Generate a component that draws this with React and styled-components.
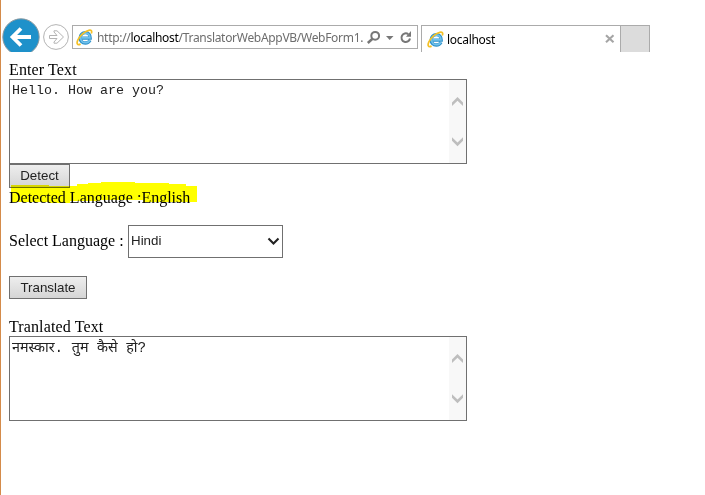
import React from "react";
import styled, { createGlobalStyle } from "styled-components";

const GlobalStyle = createGlobalStyle`
  * { box-sizing: border-box; }
  body { margin: 0; background: #fff; overflow: hidden; }
`;

const Window = styled.div`
  height: 495px;
  border-left: 1px solid #d48b4a;
  background: #fff;
  color: #000;
  font: 16px/18px "Liberation Serif", serif;
`;

const Toolbar = styled.header`
  display: flex;
  align-items: flex-start;
  height: 52px;
  overflow: hidden;
  font: 12px/22px "Noto Sans", "Open Sans", sans-serif;
`;

const NavButtons = styled.svg`
  flex: none;
  width: 71px;
  height: 52px;
`;

const AddressBar = styled.div`
  display: flex;
  flex: none;
  width: 346px;
  height: 24px;
  margin-top: 25px;
  padding-left: 3px;
  border: 1px solid #ababab;
`;

const Url = styled.span`
  width: 268px;
  margin-left: 4px;
  margin-top: 1px;
  white-space: nowrap;
  color: #6d6d6d;
  letter-spacing: ${(p) => p.$tracking};
  b { color: #000; font-weight: 400; }
`;

const BrowserIcon = styled.svg`
  flex: none;
  width: 17px;
  height: 17px;
  margin-top: ${(p) => p.$top}px;
`;

const AddressTools = styled.svg`
  flex: none;
  width: 50px;
  height: 22px;
`;

const Tab = styled.div`
  display: flex;
  flex: none;
  width: 200px;
  height: 27px;
  margin: 25px 0 0 3px;
  padding-left: 5px;
  border: solid #ababab;
  border-width: 1px 1px 0 1px;
`;

const TabTitle = styled.span`
  flex: 1;
  margin: 3px 0 0 3px;
  letter-spacing: -0.3px;
`;

const CloseIcon = styled.svg`
  width: 10px;
  height: 10px;
  margin: 8px 5px 0 0;
`;

const NewTab = styled.div`
  flex: none;
  width: 29px;
  height: 27px;
  margin-top: 25px;
  background: #dcdcdc;
  border: solid #ababab;
  border-width: 1px 1px 0 0;
`;

const Form = styled.main`
  display: flex;
  flex-direction: column;
  align-items: flex-start;
  padding: 9px 0 0 8px;
`;

const Label = styled.label`
  height: 18px;
  margin-top: ${(p) => p.$gap || 0}px;
  letter-spacing: 0.12px;
  white-space: nowrap;
`;

const Field = styled.div`
  display: flex;
  width: 458px;
  height: 85px;
  border: 1px solid #707070;
`;

const Input = styled.textarea`
  flex: 1;
  padding: ${(p) => p.$top}px 2px 0;
  border: 0;
  outline: 0;
  resize: none;
  overflow: hidden;
  background: #fff;
  color: #222;
  font: ${(p) => p.$size}px/16px "Liberation Mono", "Noto Sans Devanagari", "Noto Sans", monospace;
`;

const ScrollTrack = styled.svg`
  width: 17px;
  height: 83px;
  background: #f8f8f8;
`;

const Button = styled.button`
  width: ${(p) => p.$width}px;
  height: ${(p) => p.$height}px;
  margin-top: ${(p) => p.$gap || 0}px;
  padding: 0;
  border: 1px solid #707070;
  background: linear-gradient(#eeeeee, #d5d5d5);
  color: #222;
  font: 13.33px/20px "Liberation Sans", sans-serif;
`;

const Result = styled.div`
  position: relative;
  height: 18px;
  white-space: nowrap;
`;

const Highlight = styled.svg`
  position: absolute;
  left: 0;
  top: -6px;
  width: 190px;
  height: 22px;
  mix-blend-mode: multiply;
`;

const ResultText = styled.span`
  position: relative;
  top: 1px;
`;

const SelectRow = styled.div`
  display: flex;
  align-items: flex-start;
  height: 33px;
  margin-top: 19px;
`;

const SelectLabel = styled.span`
  width: 119px;
  padding-top: 7px;
  white-space: nowrap;
`;

const Select = styled.div`
  display: flex;
  justify-content: space-between;
  width: 155px;
  height: 33px;
  padding: 0 2px;
  border: 1px solid #707070;
  color: #222;
  font: 13.33px/29px "Liberation Sans", sans-serif;
`;

const Chevron = styled.svg`
  width: 13px;
  height: 31px;
`;

function Explorer({ top }) {
  return (
    <BrowserIcon $top={top} viewBox="0 0 17 17" fill="none">
      <path d="M14 11.2C13 13.2 11.5 14 9.3 14C6.2 14 4.2 11.8 4.2 8.9C4.2 5.9 6.4 3.7 9.4 3.7C12.4 3.7 14.2 5.9 14.2 9.1H6" stroke="#2f91c9" strokeWidth="3.3" />
      <path d="M13.8 11.2C12.8 13 11.3 13.7 9.3 13.7C6.6 13.7 4.7 11.6 4.7 8.9C4.7 6.1 6.7 4.2 9.4 4.2C12.1 4.2 13.8 6 13.9 8.9H6" stroke="#6fc1ec" strokeWidth="1.8" />
      <path d="M15.3 4.5C16.2 2.2 15.5.8 12.8 1.3C9.2 2 4 6.4 1.9 10.8C.3 14.3 1.1 16.6 4.6 15.1" stroke="#f4c026" strokeWidth="1.7" />
    </BrowserIcon>
  );
}

function TextField({ text, ...rest }) {
  return (
    <Field>
      <Input readOnly value={text} spellCheck={false} {...rest} />
      <ScrollTrack viewBox="0 0 17 83" fill="#bebebe">
        <path d="M3 22.5L8.5 17L14 22.5V26L8.5 20.8L3 26Z" />
        <path d="M3 57.3L8.5 62.5L14 57.3V60.8L8.5 66.3L3 60.8Z" />
      </ScrollTrack>
    </Field>
  );
}

export default function App() {
  return (
    <Window>
      <GlobalStyle />
      <Toolbar>
        <NavButtons viewBox="1 0 71 52" fill="none">
          <circle cx="21" cy="37" r="18.2" fill="#1e91ca" stroke="#8c9aa1" />
          <path d="M31 37H13M21 28.5L12.5 37L21 45.5" stroke="#fff" strokeWidth="3.8" />
          <circle cx="56" cy="37" r="12.4" stroke="#b4b4b4" />
          <path d="M49.5 35.5H57L54 32V30.8H57L63.5 37L57 43.2H54V42L57 38.5H49.5Z" stroke="#b4b4b4" />
        </NavButtons>
        <AddressBar>
          <Explorer top={3} />
          <Url $tracking="-0.3px">http://<b>localhost</b>/TranslatorWebAppVB/WebForm1.</Url>
          <AddressTools viewBox="365 26 50 22" fill="none">
            <circle cx="375.2" cy="35.8" r="3.9" stroke="#777" strokeWidth="2" />
            <path d="M372.5 38.8L367.8 43" stroke="#777" strokeWidth="2.5" />
            <path d="M386 36H393.5L389.7 40Z" fill="#777" />
            <path d="M408.3 34.2A4.3 4.3 0 1 0 410 38.5" stroke="#777" strokeWidth="2" />
            <path d="M406 36.8H411V31Z" fill="#777" />
          </AddressTools>
        </AddressBar>
        <Tab>
          <Explorer top={5} />
          <TabTitle>localhost</TabTitle>
          <CloseIcon viewBox="0 0 10 10"><path d="M1 1.2L8.5 8.2M8.5 1.2L1 8.2" stroke="#a5a5a5" strokeWidth="2.1" /></CloseIcon>
        </Tab>
        <NewTab />
      </Toolbar>
      <Form>
        <Label>Enter Text</Label>
        <TextField text="Hello. How are you?" $top={3} $size={13.333} />
        <Button $width={61} $height={24}>Detect</Button>
        <Result>
          <Highlight viewBox="9 182 190 22">
            <path d="M11 185H49V186H77V184H88V183H101V182H135V183H169V184H186V186H197V202H143V200H100V201H70V203H49V202H11Z" fill="#ff0" />
          </Highlight>
          <ResultText>Detected Language :English</ResultText>
        </Result>
        <SelectRow>
          <SelectLabel>Select Language :</SelectLabel>
          <Select>
            Hindi
            <Chevron viewBox="0 0 13 31"><path d="M1.5 12.5L6.5 17.5L11.5 12.5" fill="none" stroke="#222" strokeWidth="2.1" /></Chevron>
          </Select>
        </SelectRow>
        <Button $width={78} $height={23} $gap={18}>Translate</Button>
        <Label $gap={19}>Tranlated Text</Label>
        <TextField text="नमस्कार. तुम कैसे हो?" $top={3} $size={14.3} />
      </Form>
    </Window>
  );
}
